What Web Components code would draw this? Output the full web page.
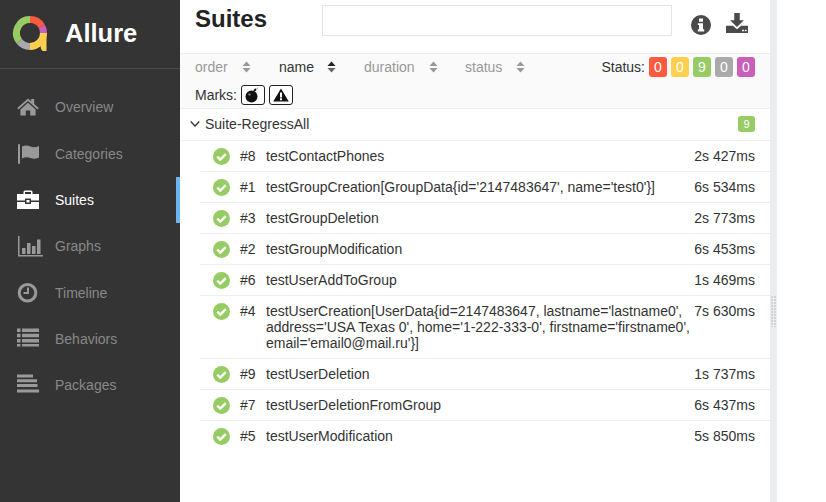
<!DOCTYPE html>
<html><head><meta charset="utf-8"><style>
html,body{margin:0;padding:0;height:100%;background:#fff;font-family:"Liberation Sans",Arial,sans-serif}
body{display:flex;height:502px;overflow:hidden}
</style></head><body>
<allure-app></allure-app>
<script>
const ICONS={
home:'<path d="M11 2.5 14.2 5.300V3h3v5l4.600 4-1.200 1.400L11 5 1.400 13.400.2 12Z"/><path d="M11 6.800 18.600 13.400V19.600h-5.400v-5h-4.400v5H3.400v-6.200Z"/>',
flag:'<rect x="1" y="1" width="2" height="20" rx="1"/><path d="M5 3.500C8 2 11 2.500 13.500 3.500S19 4.500 22 3V14.500C19 16 16 16 13.500 15S8 13.800 5 15.500Z"/>',
case:'<path d="M8 1.500h6A1.500 1.500 0 0 1 15.500 3V5H22V11.500H14V9.500H8V11.500H0V5H6.500V3A1.500 1.500 0 0 1 8 1.500ZM8 3V5H14V3Z" fill-rule="evenodd"/><path d="M0 13H8V15H14V13H22V20H0Z"/><rect x="9.500" y="11" width="3" height="2.500"/>',
bars:'<path d="M1 1H2.500V20H26V21.500H1Z"/><rect x="5" y="13" width="3.500" height="6"/><rect x="10" y="8" width="3.500" height="11"/><rect x="15" y="11" width="3.500" height="8"/><rect x="20" y="4.500" width="3.500" height="14.500"/>',
clock:'<path fill-rule="evenodd" d="M10.500 1a9.800 9.800 0 1 1 0 19.600 9.800 9.800 0 0 1 0-19.600Zm0 3a6.800 6.800 0 1 0 0 13.600 6.800 6.800 0 0 0 0-13.600Z"/><path d="M10 5.500h2V12H6.500V10H10Z"/>',
list:'<path d="M0 .5H3.500V4H0ZM5 .5H22V4H5ZM0 5.700H3.500V9.200H0ZM5 5.700H22V9.200H5ZM0 10.900H3.500V14.400H0ZM5 10.900H22V14.400H5ZM0 16.100H3.500V18.600H0ZM5 16.100H22V18.600H5Z"/>',
pack:'<path d="M0 .5H16V3.500H0ZM0 5.300H20V8.300H0ZM0 10H20.500V13H0ZM0 15.500H22V18.500H0Z"/>'
};
function def(name,html,init){customElements.define(name,class extends HTMLElement{
 constructor(){super();this.attachShadow({mode:'open'}).innerHTML=html}
 connectedCallback(){if(init)init(this)}
})}
def('nav-item',`<style>
:host{display:flex;align-items:center;height:46.300px;color:#888;font-size:14px;position:relative}
:host([active]){color:#fff}
svg{position:absolute;left:17px;top:50%;transform:translateY(-50%);fill:#999}
:host([active]) svg{fill:#fff}
span{margin-left:55px}
:host([active])::after{content:"";position:absolute;right:0;top:0;bottom:0;width:4px;background:#6cb4ee}
</style><svg width="28" height="22" viewBox="0 0 28 22"></svg><span><slot></slot></span>`,el=>{
 el.shadowRoot.querySelector('svg').innerHTML=ICONS[el.getAttribute('icon')]});
def('side-bar',`<style>
:host{display:block;width:180px;flex:none;background:#343434;height:502px}
.brand{height:68px;border-bottom:1px solid #4b4b4b;display:flex;align-items:center;color:#fff;font-weight:700;font-size:25.500px}
.brand svg{margin:0 0 2px 12px;flex:none}
.brand span{margin:0 0 2px 17px}
nav{display:block;padding-top:15.250px}
</style><div class="brand"><svg width="36" height="36" viewBox="0 0 36 36" fill="none" stroke-width="7">
<path d="M31.500 18V31C31.500 33 32.500 34 34.500 34" stroke="#ffd050" stroke-width="6"/>
<path d="M18 4.500A13.500 13.500 0 0 1 29.700 11.200" stroke="#fd5a3e"/>
<path d="M29.700 11.200A13.500 13.500 0 0 1 31.500 18" stroke="#c95fb8"/>
<path d="M31.500 18A13.500 13.500 0 0 1 18 31.500" stroke="#ffd050"/>
<path d="M18 31.500A13.500 13.500 0 0 1 7.200 26.100" stroke="#aaa"/>
<path d="M7.200 26.100A13.500 13.500 0 0 1 18 4.500" stroke="#97cc64"/>
</svg><span>Allure</span></div><nav><slot></slot></nav>`);
def('status-pill',`<style>
:host{display:inline-block;width:18px;height:20px;line-height:20px;text-align:center;border-radius:3px;color:#fff;font-size:14px;background:var(--c)}
</style><slot></slot>`);
def('sort-item',`<style>
:host{display:inline-flex;align-items:center;color:#999;font-size:14px}
:host([on]){color:#333}
svg{margin-left:var(--g,15px);fill:#999;flex:none}
:host([on]) .u{fill:#222}
:host([on]) .d{fill:#666}
</style><slot></slot><svg width="9" height="12" viewBox="0 0 10 12" preserveAspectRatio="none"><path class="u" d="M5 .5 9.500 5H.5Z"/><path class="d" d="M.5 7H9.500L5 11.500Z"/></svg>`);
def('mark-btn',`<style>
:host{display:inline-flex;align-items:center;justify-content:center;width:24px;height:20px;box-sizing:border-box;border:1px solid #222;border-radius:3px;background:#fff}
</style><slot></slot>`);
def('test-row',`<style>
:host{display:flex;align-items:flex-start;border-bottom:1px solid #eee;margin-left:20px;padding:7px 15px 7px 13px;font-size:14px;line-height:16px;color:#333}
:host(:last-child){border-bottom:0}
svg{flex:none;margin:0 10px -1px 0}
.o{width:26px;flex:none}
.n{flex:1;min-width:0}
.t{flex:none}
</style><svg width="17" height="17" viewBox="0 0 18 18"><circle cx="9" cy="9" r="9" fill="#97cc64"/><path d="M4.500 9.200 7.700 12.300 13.500 6.500" fill="none" stroke="#fff" stroke-width="2.600"/></svg><span class="o"></span><span class="n"><slot></slot></span><span class="t"></span>`,el=>{
 el.shadowRoot.querySelector('.o').textContent='#'+el.getAttribute('order');
 el.shadowRoot.querySelector('.t').textContent=el.getAttribute('time');});
def('page-head',`<style>
:host{display:flex;align-items:flex-start;height:53px;border-bottom:1px solid #eee}
h1{margin:5px 0 0 15px;width:127px;font-size:24px;line-height:27px;color:#222;font-weight:700}
.box{width:348px;height:29px;border:1px solid #e5e5e5;margin-top:5px;background:#fff}
.ic{display:flex;align-items:flex-start;margin-left:19px;margin-top:15px;gap:15px;fill:#4a4a4a}
.dl{margin-top:-2px}
</style><h1>Suites</h1><div class="box"></div><div class="ic">
<svg width="20" height="20" viewBox="1 1 20 20"><path fill-rule="evenodd" d="M11 1a10 10 0 1 1 0 20 10 10 0 0 1 0-20ZM9 4.500v3.200h4V4.500ZM7.800 9.200V11H9v4.300H7.800V17.500h6.400V15.300H13V9.200Z"/></svg>
<svg class="dl" width="22" height="20" viewBox="0 0 24 22" preserveAspectRatio="none"><path d="M9 0h6V8h4.500L12 15.500 4.500 8H9Z"/><path d="M0 14h7.500L12 18 16.500 14H24V22H0ZM17.500 18.500h2v1.500h-2ZM20.500 18.500h2v1.500h-2Z" fill-rule="evenodd"/></svg>
</div>`);
def('tool-bar',`<style>
:host{display:block;height:54px;background:#fafafa;border-bottom:1px solid #eee;font-size:14px;color:#333}
.r1{display:flex;align-items:center;height:26px;padding:0 15px}
.s{margin-left:auto;display:flex;align-items:center;gap:4px}
.r2{display:flex;align-items:center;gap:4px;padding:4px 15px 0;height:22px}
.a{width:84px}.b{width:85px}.c{width:101px}
</style><div class="r1">
<sort-item class="a" style="--g:14px">order</sort-item>
<sort-item class="b" on style="--g:13px">name</sort-item>
<sort-item class="c" style="--g:14px">duration</sort-item>
<sort-item style="--g:14px">status</sort-item>
<div class="s"><span>Status:</span>
<status-pill style="--c:#fd5a3e">0</status-pill><status-pill style="--c:#ffd050">0</status-pill><status-pill style="--c:#97cc64">9</status-pill><status-pill style="--c:#aaa">0</status-pill><status-pill style="--c:#c95fb8">0</status-pill></div>
</div><div class="r2"><span>Marks:</span>
<mark-btn><svg width="18" height="16" viewBox="0 0 18 16"><circle cx="7.500" cy="9.500" r="6" fill="#111"/><path d="M10 4 12 2" stroke="#111" stroke-width="2"/><path d="M12.500 2 14 .8" stroke="#888" stroke-width="1"/><circle cx="5.500" cy="7.500" r="1.200" fill="#777"/></svg></mark-btn>
<mark-btn><svg width="16" height="14" viewBox="0 0 16 14"><path fill-rule="evenodd" d="M8 .5 15.800 13.500H.2ZM7 4.500v5h2v-5ZM7 10.300v2h2v-2Z" fill="#111"/></svg></mark-btn></div>`);
def('suite-group',`<style>
:host{display:block}
.h{display:flex;align-items:center;border-bottom:1px solid #eee;font-size:14px;color:#333;padding:0 15px 2px 10px;box-sizing:border-box;height:32px}
.h svg{margin-right:5px}
.b{margin-left:auto;width:17px;height:16px;line-height:16px;text-align:center;background:#97cc64;color:#fff;font-size:11px;border-radius:3px}
</style><div class="h"><svg width="10" height="8" viewBox="0 0 10 8"><path d="M.7 1.500 5 6 9.300 1.500" fill="none" stroke="#333" stroke-width="1.300"/></svg><span></span><div class="b">9</div></div><slot></slot>`,el=>{
 el.shadowRoot.querySelector('span').textContent=el.getAttribute('name');});
def('allure-app',`<style>
:host{display:flex;width:826px;height:502px}
main{width:590px;flex:none;display:block;height:502px;overflow:hidden}
.split{width:7px;flex:none;background:#ebecef;position:relative}
.split::after{content:"";position:absolute;left:1px;top:296px;width:5px;height:31px;background:conic-gradient(from 270deg at 2px 2px,#d2d3d6 25%,transparent 0) 0 0/3px 3px}
</style><side-bar>
<nav-item icon="home">Overview</nav-item>
<nav-item icon="flag">Categories</nav-item>
<nav-item icon="case" active>Suites</nav-item>
<nav-item icon="bars">Graphs</nav-item>
<nav-item icon="clock">Timeline</nav-item>
<nav-item icon="list">Behaviors</nav-item>
<nav-item icon="pack">Packages</nav-item>
</side-bar><main><page-head></page-head><tool-bar></tool-bar>
<suite-group name="Suite-RegressAll">
<test-row order="8" time="2s 427ms">testContactPhones</test-row>
<test-row order="1" time="6s 534ms">testGroupCreation[GroupData{id='2147483647', name='test0'}]</test-row>
<test-row order="3" time="2s 773ms">testGroupDeletion</test-row>
<test-row order="2" time="6s 453ms">testGroupModification</test-row>
<test-row order="6" time="1s 469ms">testUserAddToGroup</test-row>
<test-row order="4" time="7s 630ms">testUserCreation[UserData{id=2147483647, lastname='lastname0', address='USA Texas 0', home='1-222-333-0', firstname='firstname0', email='email0@mail.ru'}]</test-row>
<test-row order="9" time="1s 737ms">testUserDeletion</test-row>
<test-row order="7" time="6s 437ms">testUserDeletionFromGroup</test-row>
<test-row order="5" time="5s 850ms">testUserModification</test-row>
</suite-group></main><div class="split"></div>`);
</script></body></html>
